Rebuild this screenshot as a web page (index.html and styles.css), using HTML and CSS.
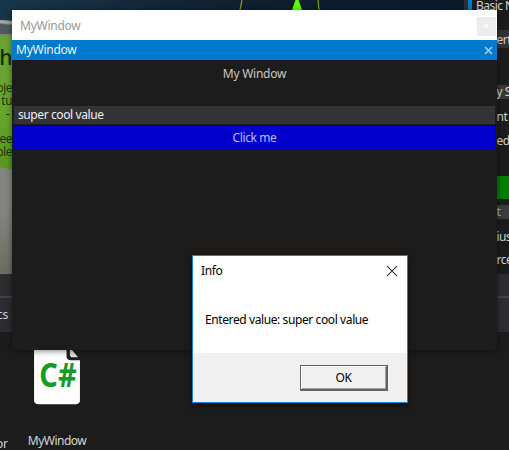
FILE: index.html
```
<!DOCTYPE html>
<html lang="en">
<head>
<meta charset="utf-8">
<title>MyWindow</title>
<link rel="stylesheet" href="styles.css">
</head>
<body>
<div class="desktop">
  <div class="editor">
    <div class="viewport">
      <svg class="scene" width="464" height="274" viewBox="0 0 464 274">
        <defs>
          <linearGradient id="sky" x1="0" x2="1"><stop offset="0" stop-color="#18364a"/><stop offset=".5" stop-color="#10202f"/><stop offset="1" stop-color="#0b1a2a"/></linearGradient>
          <linearGradient id="wall" x1="0" y1="0" x2="0" y2="1"><stop offset="0" stop-color="#7d807a"/><stop offset=".6" stop-color="#83867f"/><stop offset=".75" stop-color="#83867f"/><stop offset="1" stop-color="#6b6c63"/></linearGradient>
          <linearGradient id="note" x1="0" y1="0" x2="0" y2="1"><stop offset="0" stop-color="#6ba335"/><stop offset=".6" stop-color="#67a52d"/><stop offset="1" stop-color="#57951f"/></linearGradient>
        </defs>
        <rect width="464" height="274" fill="url(#sky)"/>
        <path d="M0 20L12 21V274H0Z" fill="url(#wall)"/>
        <path d="M0 20L12 21V24L0 23Z" fill="#a0a6a4"/>
        <path d="M0 24L12 25V34H0Z" fill="#4e5a5d"/>
        <path d="M0 35L12 36V170L0 167Z" fill="url(#note)"/>
        <path d="M242 0L240 10M318 0L319 10" stroke="#8a9420" stroke-width="1.3"/>
        <path d="M295.500 0H298.500L302 10H292Z" fill="#5dff00"/>
      </svg>
      <div class="note">
        <span class="note-title">ah</span>
        <span>oje</span><span>tu</span><span class="dash">-</span><span class="gap">ee</span><span>ole</span>
      </div>
    </div>
    <div class="side">
      <div class="head">Basic N</div>
      <div class="row field">ert</div>
      <div class="row section">y S</div>
      <div class="row item">nt C</div>
      <div class="row item second">ed</div>
      <div class="row swatch"></div>
      <div class="row group">t</div>
      <div class="row item third">ius</div>
      <div class="row item fourth">rce</div>
    </div>
  </div>
  <div class="toolbar"></div>
  <div class="pathbar">cs</div>
  <div class="assets">
    <div class="asset clipped">or</div>
    <div class="asset">
      <svg width="50" height="68" viewBox="0 0 50 68">
        <path d="M1 0H35V15Q35 19 39 19H49V61Q49 65 45 65H5Q1 65 1 61Z" fill="#fff"/>
        <path d="M38.500 8H40.500L47 16H41.500Q38.500 16 38.500 13Z" fill="#dcdcde"/>
        <text class="lang" x="6.500" y="47.500" textLength="39" lengthAdjust="spacingAndGlyphs">C#</text>
      </svg>
      <span class="asset-name">MyWindow</span>
    </div>
  </div>

  <section class="window">
    <header class="caption"><span>MyWindow</span><i class="caption-close"></i></header>
    <div class="tab"><span>MyWindow</span>
      <svg width="9" height="9" viewBox="0 0 9 9"><path d="M1 1L8 8M8 1L1 8" stroke="#a4d2f0" stroke-width="1.600"/></svg>
    </div>
    <div class="content">
      <div class="label"><span>My Window</span></div>
      <div class="input"><span>super cool value</span></div>
      <div class="button"><span>Click me</span></div>
    </div>
  </section>

  <section class="dialog">
    <header class="dialog-head"><span>Info</span>
      <svg width="12" height="12" viewBox="0 0 12 12"><path d="M1 1L11 11M11 1L1 11" stroke="#111" stroke-width="1.050"/></svg>
    </header>
    <div class="message"><span>Entered value: super cool value</span></div>
    <footer class="actions"><div class="ok"><span>OK</span></div></footer>
  </section>
</div>
</body>
</html>
```
FILE: styles.css
```
* { box-sizing: border-box; }
body { margin: 0; background: #1c1c1c; font: 12px/16px "Noto Sans", "Open Sans", sans-serif; letter-spacing: -.25px; color: #d4d4d4; }
.desktop { position: relative; width: 509px; height: 450px; overflow: hidden; }
.editor { display: flex; height: 274px; }
.viewport { position: relative; width: 464px; }
.scene { display: block; }
.note { position: absolute; left: 0; top: 43px; width: 12px; display: flex; flex-direction: column; align-items: flex-end; overflow: hidden; font: 500 12px/13px "Open Sans", sans-serif; letter-spacing: -.5px; color: #18300f; }
.note .note-title { font-size: 21px; line-height: 29px; margin-bottom: 9px; font-weight: 600; }
.note .dash { padding-right: 3px; }
.note .gap { margin-top: 12px; }
.side { width: 45px; background: #1c1c1c; border-left: 4px solid #303034; white-space: nowrap; }
.head { height: 30px; border-left: 4px solid #007acc; padding-left: 4px; line-height: 11px; letter-spacing: -.55px; }
.row { padding-left: 28.500px; overflow: hidden; letter-spacing: -.5px; }
.field { height: 18px; line-height: 19px; background: #333337; }
.section { height: 14px; line-height: 14px; margin-top: 37px; background: #38383c; }
.item { height: 16px; }
.row.item { margin-top: 10px; }
.row.second { margin-top: 8px; }
.row.third { margin-top: 10px; }
.row.fourth { margin-top: 7px; }
.swatch { height: 23px; margin-top: 27px; background: #007f00; }
.group { height: 14px; line-height: 14px; margin-top: 6px; background: #3c3c40; color: #a8a8aa; }
.toolbar { height: 24px; background: #2d2d31; border-bottom: 2px solid #434347; }
.pathbar { height: 34px; background: #2d2d31; line-height: 33px; text-indent: -3px; }
.assets { display: flex; height: 118px; }
.asset { display: flex; flex-direction: column; align-items: center; width: 50px; padding-top: 10px; }
.asset.clipped { width: 32px; display: block; padding-top: 103px; text-indent: -4px; line-height: 17px; }
.asset svg { display: block; height: 68px; }
.lang { font: 700 36px "Noto Sans", sans-serif; letter-spacing: 0; fill: #169b24; }
.asset-name { margin-top: 25px; line-height: 18px; white-space: nowrap; letter-spacing: -.5px; }
.window { position: absolute; left: 12px; top: 10px; width: 485px; height: 340px; background: #1c1c1c; box-shadow: 0 1px 6px rgba(0,0,0,.5); }
.caption { height: 30px; padding: 0 1px 0 8px; display: flex; justify-content: space-between; background: #fff; color: #999; line-height: 31px; }
.caption-close { width: 19px; height: 19px; margin-top: 7px; background: #ececec; }
.caption-close::after { content: ""; display: block; width: 4px; height: 4px; margin: 7px; background: #f7f7f7; }
.tab { height: 20px; padding: 0 4px; display: flex; justify-content: space-between; align-items: center; background: #007acc; color: #e8f4fb; line-height: 20px; }
.content { padding-top: 2px; }
.label { height: 44px; line-height: 23px; text-align: center; color: #c8c8c8; }
.input { height: 18px; margin: 0 2px; padding-left: 4px; line-height: 18px; background: #333337; color: #eee; letter-spacing: -.4px; }
.button { height: 25px; margin: 1px 1px 0; border: 1px solid #0b0b55; background: #0000cb; color: #bdbdf0; text-align: center; line-height: 24px; letter-spacing: -.4px; }
.dialog { position: absolute; left: 192px; top: 255px; width: 216px; height: 148px; border: 1px solid #1883d7; background: #fff; color: #000; box-shadow: 0 2px 7px rgba(0,0,0,.55); letter-spacing: -.4px; }
.dialog-head { height: 30px; padding: 0 9px 0 8px; display: flex; justify-content: space-between; align-items: center; }
.message { height: 67px; padding: 26px 0 0 12px; white-space: nowrap; }
.actions { height: 49px; padding: 12px 19px 0 0; display: flex; justify-content: flex-end; background: #f0f0f0; }
.ok { width: 88px; height: 26px; border: 1px solid #646464; border-right-width: 2px; border-bottom-width: 2px; box-shadow: inset 1px 1px #fff, inset -1px -1px #a0a0a0; text-align: center; line-height: 24px; }
```
